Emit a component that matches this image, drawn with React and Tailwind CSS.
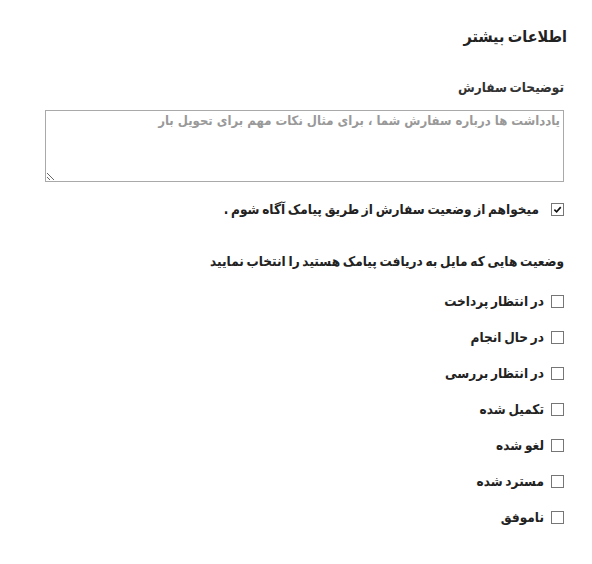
import React from 'react'

const statuses = [
  'در انتظار پرداخت',
  'در حال انجام',
  'در انتظار بررسی',
  'تکمیل شده',
  'لغو شده',
  'مسترد شده',
  'ناموفق',
]

const Box = ({ checked }) => (
  <span className="flex h-[13px] w-[13px] shrink-0 items-center justify-center border border-[#767676] bg-white">
    {checked && (
      <svg viewBox="0 0 10 10" className="h-[9px] w-[9px]">
        <path d="M1.5 5.2 L4 7.6 L8.6 2.4" fill="none" stroke="#111" strokeWidth="1.8" />
      </svg>
    )}
  </span>
)

const App = () => {
  return (
    <div dir="rtl" className="min-h-screen bg-white pl-[45px] pr-[28px] pt-[26px] text-[#222] [word-spacing:-1.5px]" style={{ fontFamily: '"DejaVu Sans Condensed", "DejaVu Sans", sans-serif' }}>
      <h3 className="-mr-[3px] text-[16px] font-bold leading-[22px]">اطلاعات بیشتر</h3>

      <label className="mt-[28px] block text-[13.5px] font-bold leading-[22px] text-[#333]">توضیحات سفارش</label>
      <textarea
        className="mt-[12px] block h-[72px] w-full resize-y border border-[#a9a9a9] px-[3px] py-[1px] text-[13px] font-bold leading-[18px] [word-spacing:0] placeholder:text-[#999] outline-none"
        placeholder="یادداشت ها درباره سفارش شما ، برای مثال نکات مهم برای تحویل بار"
      />

      <div className="mt-[16px] flex items-center gap-[12px]">
        <Box checked />
        <span className="text-[13.5px] font-bold leading-[22px]">میخواهم از وضعیت سفارش از طریق پیامک آگاه شوم .</span>
      </div>

      <p className="mt-[30px] text-[13.5px] font-bold leading-[22px]">وضعیت هایی که مایل به دریافت پیامک هستید را انتخاب نمایید</p>

      <div className="mt-[18px] flex flex-col gap-[14px]">
        {statuses.map((s) => (
          <div key={s} className="flex items-center gap-[7px]">
            <Box />
            <span className="text-[13.5px] font-bold leading-[22px]">{s}</span>
          </div>
        ))}
      </div>
    </div>
  )
}

export default App
